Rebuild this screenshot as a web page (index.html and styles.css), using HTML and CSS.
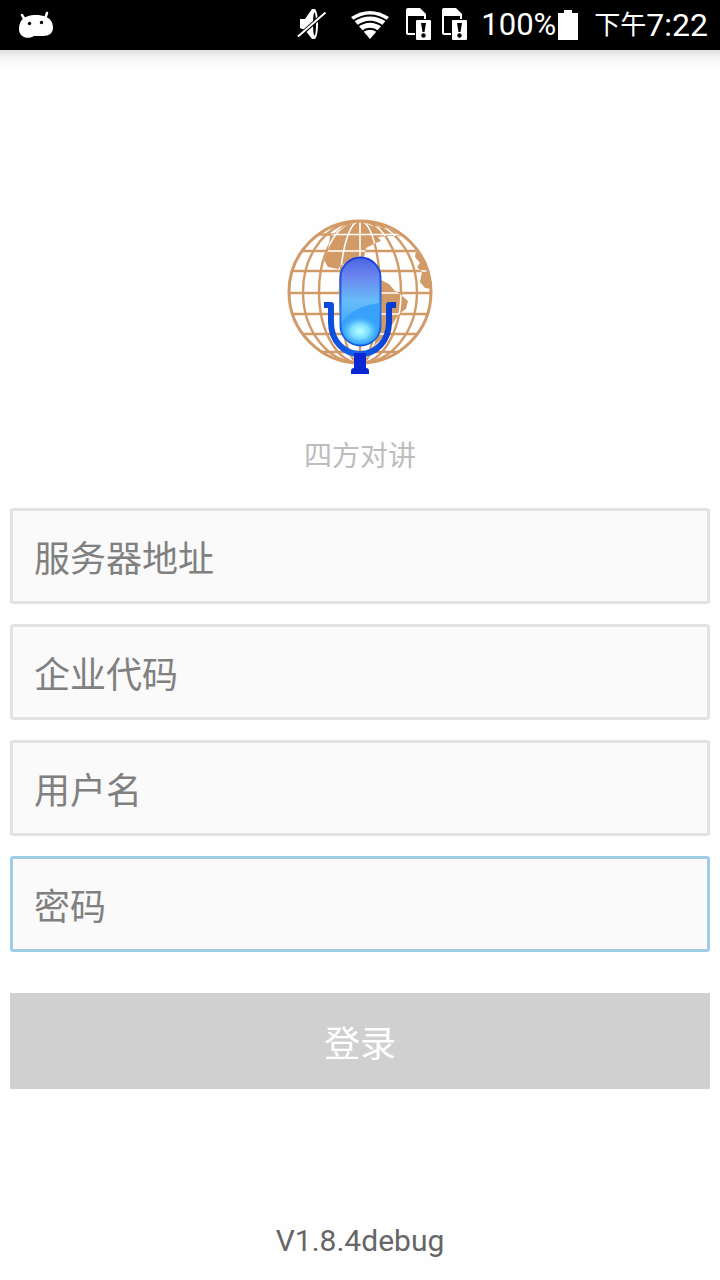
FILE: index.html
```html
<!DOCTYPE html>
<html lang="zh-CN">
<head>
<meta charset="utf-8">
<meta name="viewport" content="width=device-width, initial-scale=1">
<title>四方对讲</title>
<link rel="stylesheet" href="styles.css">
</head>
<body>
<header class="status">
  <svg class="status-android" width="40" height="30" viewBox="16 10 40 30" aria-hidden="true">
    <path d="M22 15L25 20M47 13L45 19" stroke="#fff" stroke-width="2.5" stroke-linecap="round"/>
    <path d="M19 29C19 23 22 18 27 16.500C33 14.500 40 14.500 46 17C51 19 53 23 53 28C53 33 49 36 43 36L34 36C31 38 26 38.500 23 36.500C20 35 19 32 19 29Z" fill="#fff"/>
    <circle cx="29.500" cy="23.500" r="1.700"/><circle cx="41.500" cy="22.500" r="1.700"/>
  </svg>
  <svg class="status-icons" width="172" height="36" viewBox="296 8 172 36" aria-hidden="true">
    <path d="M299 20H304L311 10H314C318 14 318 36 314 40H311L304 31L299 29Z" fill="#fff"/>
    <ellipse cx="313.500" cy="25" rx="1.500" ry="11.500"/>
    <path d="M298 37L325 13" stroke="#000" stroke-width="4"/>
    <path d="M297 37.500L324.500 13.500" stroke="#fff" stroke-width="2"/>
    <path d="M369 40L350 18Q369 6 388 18Z" fill="#fff"/>
    <path d="M352 22Q369 11 386 22M356 27.500Q369 18 382 27.500M360.500 33Q369 26.500 377.500 33" fill="none" stroke="#000" stroke-width="2"/>
    <g id="sim">
      <path d="M407 9H419L425 15V36H407Q405 36 405 34V11Q405 9 407 9Z" fill="#fff"/>
      <path d="M407 17H423V34H407Z"/>
      <rect x="414" y="20" width="17" height="22"/>
      <rect x="415" y="21" width="15" height="20" rx="1" fill="#fff"/>
      <path d="M420 24H425L423.500 33H421.500Z"/><circle cx="422.500" cy="36.500" r="2.200"/>
    </g>
    <use href="#sim" x="36"/>
  </svg>
  <span class="battery-text">100%</span>
  <svg width="20" height="30" viewBox="0 0 20 30" aria-hidden="true"><path d="M6 0H14V3H20V30H0V3H6Z" fill="#fff"/></svg>
  <span class="time"><span class="period">下午</span>7:22</span>
</header>
<main class="login">
  <svg class="logo" width="160" height="170" viewBox="280 210 160 170" role="img" aria-label="四方对讲">
    <defs>
      <linearGradient id="capsule" x1="0" y1="0" x2="0" y2="1">
        <stop offset="0" stop-color="#4865e4"/><stop offset=".2" stop-color="#6b83ee"/><stop offset=".5" stop-color="#66bcf8"/><stop offset="1" stop-color="#2898fb"/>
      </linearGradient>
      <linearGradient id="edge" x1="0" y1="0" x2="0" y2="1">
        <stop offset="0" stop-color="#183fdc"/><stop offset=".6" stop-color="#2673ee"/><stop offset="1" stop-color="#0754dc"/>
      </linearGradient>
      <radialGradient id="glow">
        <stop offset="0" stop-color="#b8ffff"/><stop offset=".5" stop-color="#78dcff"/><stop offset="1" stop-color="#40aeff" stop-opacity="0"/>
      </radialGradient>
      <linearGradient id="stand" x1="0" y1="0" x2="1" y2="0">
        <stop offset="0" stop-color="#0a48d8"/><stop offset=".45" stop-color="#1764e8"/><stop offset="1" stop-color="#0638cf"/>
      </linearGradient>
      <clipPath id="disc"><circle cx="360" cy="292" r="72"/></clipPath>
      <path id="land" d="M330 236L345 226L360 221L372 226L390 229L402 236L389 236L378 237L381 241L376 243L366 248L363 261L341 265L338 269L328 267L324 260L328 251ZM381 280L389 284L395 291L400 294L408 301L406 309L399 314L393 323L387 334L377 343L368 352L381 309ZM416 250L423 256L431 272L433 289L425 288L420 282L422 272L417 267L420 263L415 257Z"/>
      <clipPath id="land-clip"><use href="#land"/></clipPath>
      <g id="grid">
        <path d="M288 234.500H432M288 251H432M288 271H432M288 293H432M288 314H432M288 334H432M288 352H432M360 220V364"/>
        <ellipse cx="360" cy="292" rx="20" ry="71"/><ellipse cx="360" cy="292" rx="41" ry="71"/><ellipse cx="360" cy="292" rx="57" ry="71"/>
      </g>
    </defs>
    <g clip-path="url(#disc)">
      <use href="#grid" fill="none" stroke="#d19a66" stroke-width="2.400"/>
      <use href="#land" fill="#d19a66"/>
      <g clip-path="url(#land-clip)"><use href="#grid" fill="none" stroke="#fff" stroke-width="1.600"/></g>
    </g>
    <circle cx="360" cy="292" r="71" fill="none" stroke="#d19a66" stroke-width="3"/>
    <path d="M324 305H331V322C331 341 344 354 360 354C376 354 389 341 389 322V305H396" fill="none" stroke="url(#stand)" stroke-width="6" stroke-linejoin="round"/>
    <path d="M354 353H366V368Q369 368 369 371V374H351V371Q351 368 354 368Z" fill="#0928d4"/>
    <rect x="340.500" y="257.500" width="40" height="88" rx="20" fill="url(#capsule)" stroke="url(#edge)" stroke-width="2"/>
    <path d="M342 322Q352 307 379 303V326C379 338 371 344 360.500 344C350 344 342 337 342 326Z" fill="#38a2fa"/>
    <ellipse cx="360" cy="331" rx="19" ry="15" fill="url(#glow)"/>
  </svg>
  <h1 class="name">四方对讲</h1>
  <form class="form">
    <input class="field" type="text" aria-label="服务器地址" placeholder="服务器地址">
    <input class="field" type="text" aria-label="企业代码" placeholder="企业代码">
    <input class="field" type="text" aria-label="用户名" placeholder="用户名">
    <input class="field field-active" type="password" aria-label="密码" placeholder="密码">
    <button class="submit" type="button">登录</button>
  </form>
  <p class="version">V1.8.4debug</p>
</main>
</body>
</html>
```
FILE: styles.css
```css
* { box-sizing: border-box; }
body {
  margin: 0;
  min-height: 100vh;
  display: flex;
  flex-direction: column;
  background: #fefefe;
  font-family: Roboto, "Noto Sans CJK SC", sans-serif;
}
.status {
  height: 50px;
  padding: 0 12px 0 16px;
  display: flex;
  align-items: center;
  background: #000;
  color: #fff;
  font-size: 32px;
  line-height: 50px;
  white-space: nowrap;
}
.status-icons { margin-left: auto; }
.battery-text {
  margin: 0 2px 0 12px;
  font-size: 31px;
}
.time {
  display: flex;
  margin-left: 16px;
}
.period { font-size: 26px; }
.login {
  flex: 1;
  display: flex;
  flex-direction: column;
  align-items: center;
  padding: 160px 10px 19px;
  background: linear-gradient(#dedede, #f6f6f6 8px, #fefefe 20px);
}
.logo { display: block; }
.name {
  margin: 56px 0 30px;
  font-size: 28px;
  line-height: 42px;
  font-weight: 400;
  color: #bdbdbd;
}
.form {
  width: 100%;
  display: flex;
  flex-direction: column;
  gap: 20px;
}
.field {
  width: 100%;
  height: 96px;
  padding: 7px 21px 0;
  border: 3px solid #e3e3e3;
  border-radius: 3px;
  outline: 0;
  background: #fafafa;
  color: #333;
  font: 36px Roboto, "Noto Sans CJK SC", sans-serif;
}
.field::placeholder { color: #808080; opacity: 1; }
.field-active { border-color: #9fcde6; }
.submit {
  height: 96px;
  margin-top: 21px;
  padding: 0;
  border: 0;
  background: #d0d0d0;
  color: #fff;
  font: 36px Roboto, "Noto Sans CJK SC", sans-serif;
}
.version {
  margin: auto 0 0;
  font-size: 30px;
  line-height: 40px;
  color: #666;
}
```
